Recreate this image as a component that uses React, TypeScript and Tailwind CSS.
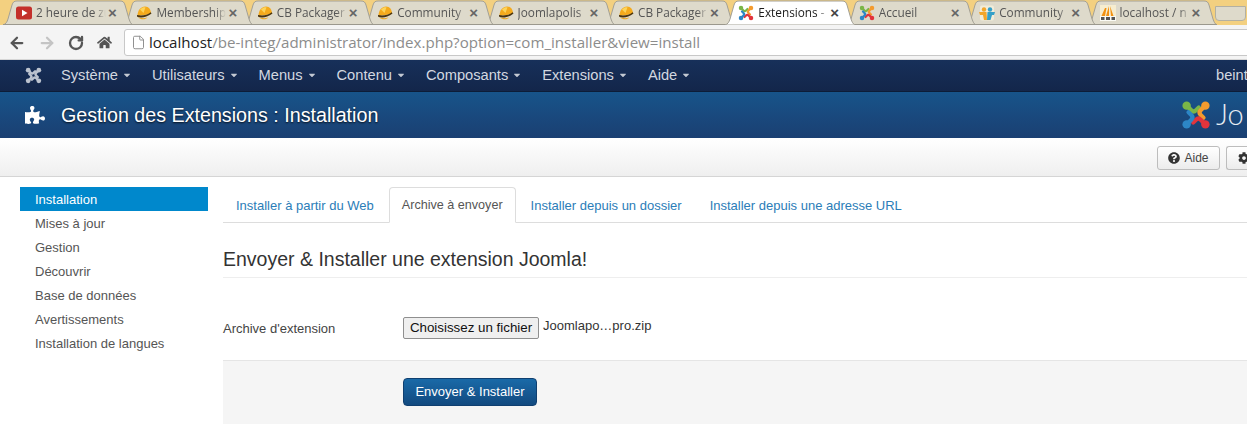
import React from "react";
import { ArrowLeft, ArrowRight, RotateCw, File } from "lucide-react";
import { FaPuzzlePiece, FaQuestionCircle, FaCog, FaHome, FaCaretDown } from "react-icons/fa";

function Hat() {
  return (
    <svg width="16" height="16" viewBox="0 0 16 16" className="shrink-0">
      <path d="M1.500 11C1.500 5 5 1.500 9 1.500c3.800 0 6 3 6 7.500z" fill="#f4aa1c" />
      <path d="M4 4.500C6 2.500 8 2 9.500 2.300L7.500 8z" fill="#fcd45c" />
      <path d="M1 11.500c3 1.800 9 1.500 14.500-3l-.8-1.200C11 10.500 5 11 1 10z" fill="#4a3512" />
      <path d="M2 12.500c3 2.500 7.500 2.200 9.500 0l-4 .8z" fill="#eda81f" />
    </svg>
  );
}

const ARM = "M6.500 6.500 L11 11 Q13.500 13.500 16 11 L19 8";

function Joomla({ size = 16, mono }: { size?: number; mono?: string }) {
  const colors = mono ? [mono, mono, mono, mono] : ["#7ab648", "#f49b2e", "#e2343c", "#2d86c6"];
  return (
    <svg width={size} height={size} viewBox="0 0 32 32" className="shrink-0">
      {colors.map((c, i) => (
        <g key={i} transform={`rotate(${i * 90} 16 16)`}>
          <path d={ARM} fill="none" stroke={c} strokeWidth="4.500" strokeLinecap="round" />
          <circle cx="6" cy="6" r="4.500" fill={c} />
        </g>
      ))}
    </svg>
  );
}

function Youtube() {
  return (
    <svg width="16" height="16" viewBox="0 0 16 16" className="shrink-0">
      <rect x="0" y="1.500" width="16" height="13" rx="2.500" fill="#c4302b" />
      <path d="M6 4.800l5.500 3.200L6 11.200z" fill="#fff" />
    </svg>
  );
}

function People() {
  return (
    <svg width="16" height="16" viewBox="0 0 16 16" className="shrink-0">
      <rect x="1" y="0.500" width="14" height="15" rx="2" fill="#f1ecd8" />
      <circle cx="5" cy="4.500" r="2.200" fill="#f2a62a" />
      <circle cx="11" cy="4.500" r="2.200" fill="#35a0c8" />
      <path d="M0 7h7.500l.5 8H5l-1-5H1z" fill="#f2a62a" />
      <path d="M8.500 7H16l-1 3h-2l-1.500 5H8z" fill="#35a0c8" />
    </svg>
  );
}

function Pma() {
  return (
    <svg width="16" height="16" viewBox="0 0 16 16" className="shrink-0">
      <rect width="16" height="16" fill="#f6edcf" />
      <path d="M1.500 11L5 3h1.500L5 11zM6 11l3-10v10zM10 1l3.500 10h-2.500z" fill="#f29111" />
      <rect x="0" y="11" width="16" height="5" fill="#fbfbf5" />
      <rect x="1" y="12" width="3.500" height="3" fill="#555" />
      <rect x="6" y="12" width="4" height="3" fill="#555" />
      <rect x="11.500" y="12" width="3.500" height="3" fill="#555" />
    </svg>
  );
}

function Tab({ icon, label, active, z }: { icon: React.ReactNode; label: string; active?: boolean; z: number }) {
  return (
    <div className="relative w-[120.4px] h-full shrink-0 flex items-center pl-[13px]" style={{ zIndex: z }}>
      <svg className="absolute left-0 top-0" width="130" height="25" viewBox="0 0 130 25">
        <path
          d="M0 25C3 24 4 22 5 19L9 5C10 2 11 1 14 1H117C120 1 121 2 122 5L126 19C127 22 128 24 130 25Z"
          fill={active ? "#ffffff" : "#dedacb"}
          stroke="#a3a095"
          strokeWidth="1"
        />
        {!active && <path d="M0 24.500H130" stroke="#9b988d" strokeWidth="1" />}
      </svg>
      <div className="relative flex items-center gap-[4px] w-[90px] mt-[1px]">
        {icon}
        <span
          className={`flex-1 min-w-0 whitespace-nowrap overflow-hidden text-[11.800px] font-['Open_Sans',sans-serif] [mask-image:linear-gradient(to_right,black_85%,transparent)] ${active ? "text-[#1a1a1a]" : "text-[#555555]"}`}
        >
          {label}
        </span>
      </div>
      <span className={`absolute left-[105px] top-[5px] text-[15px] leading-[16px] font-bold ${active ? "text-[#444444]" : "text-[#666666]"}`}>×</span>
    </div>
  );
}

const menu = ["Système", "Utilisateurs", "Menus", "Contenu", "Composants", "Extensions", "Aide"];
const side = ["Mises à jour", "Gestion", "Découvrir", "Base de données", "Avertissements", "Installation de langues"];
const browserTabs: { icon: React.ReactNode; label: string; active?: boolean }[] = [
  { icon: <Youtube />, label: "2 heure de zu" },
  { icon: <Hat />, label: "Membership" },
  { icon: <Hat />, label: "CB Packager" },
  { icon: <Hat />, label: "Community" },
  { icon: <Hat />, label: "Joomlapolis" },
  { icon: <Hat />, label: "CB Packager" },
  { icon: <Joomla />, label: "Extensions -", active: true },
  { icon: <Joomla />, label: "Accueil" },
  { icon: <People />, label: "Community" },
  { icon: <Pma />, label: "localhost / n" },
];

export default function App() {
  return (
    <div className="w-[1247px] h-[431px] overflow-hidden bg-white flex flex-col font-['Liberation_Sans',sans-serif]">
      {/* browser tab strip */}
      <div className="h-[25px] shrink-0 bg-[#f3d080] flex pl-[3px] overflow-hidden">
        {browserTabs.map((t, i) => (
          <Tab key={i} icon={t.icon} label={t.label} active={t.active} z={t.active ? 50 : 20 - i} />
        ))}
        <div className="w-[31px] h-[15px] mt-[6px] ml-[8px] shrink-0 rounded-b-[4px] bg-[#dedacb] border border-[#b3b0a2]" />
      </div>

      {/* browser toolbar */}
      <div className="h-[35px] shrink-0 bg-[#f4f4f4] border-b border-[#d6d6d6] flex items-center pl-[8px] pt-[1px]">
        <ArrowLeft size={18} strokeWidth={3} className="text-[#555555]" />
        <ArrowRight size={18} strokeWidth={3} className="text-[#c4c4c4] ml-[12px]" />
        <RotateCw size={16} strokeWidth={3.500} className="text-[#555555] ml-[12px]" />
        <FaHome size={15} className="text-[#555555] ml-[13px]" />
        <div className="ml-[12px] h-[27px] flex-1 -mr-[4px] rounded-l-[3px] border border-[#c8c8c8] bg-white flex items-center pl-[6px]">
          <File size={15} strokeWidth={1.500} className="text-[#8a8a8a]" />
          <span className="ml-[3px] whitespace-nowrap text-[15.100px] font-['Open_Sans',sans-serif] text-[#8c8c8c]">
            <span className="text-[#222222]">localhost</span>/be-integ/administrator/index.php?option=com_installer&amp;view=install
          </span>
        </div>
      </div>

      {/* joomla navbar */}
      <div className="h-[32px] shrink-0 bg-gradient-to-b from-[#17305a] to-[#13264a] border-b border-[#0d1d38] flex items-center pl-[25px] text-[14.660px] text-[#d3d8e0]">
        <Joomla size={17} mono="#bcc3cf" />
        <div className="flex ml-[19px] gap-[20px]">
          {menu.map((m) => (
            <span key={m} className="flex items-center gap-[4px] whitespace-nowrap">
              {m}
              <FaCaretDown size={10} className="text-[#c3c9d3]" />
            </span>
          ))}
        </div>
        <span className="ml-auto w-[31px] shrink-0 overflow-hidden whitespace-nowrap">beint</span>
      </div>

      {/* page title */}
      <div className="h-[46px] shrink-0 bg-gradient-to-b from-[#17548a] to-[#1a3f72] flex items-center pl-[25px] text-white">
        <FaPuzzlePiece size={20} />
        <h1 className="ml-[16px] text-[19.700px] mt-[1px] whitespace-nowrap [text-shadow:0_1px_2px_rgba(0,0,0,0.8)]">
          Gestion des Extensions : Installation
        </h1>
        <div className="ml-auto w-[66px] shrink-0 flex items-center overflow-hidden">
          <Joomla size={30} />
          <span className="ml-[5px] -mt-[2px] text-[29px] leading-[34px] font-['Lato',sans-serif] font-light text-[#e8edf3] whitespace-nowrap">Jo</span>
        </div>
      </div>

      {/* subhead */}
      <div className="h-[39px] shrink-0 bg-gradient-to-b from-white to-[#efefef] border-b border-[#d5d5d5] flex items-center justify-end gap-[6px] pt-[1px] text-[12px] text-[#444444]">
        <button className="h-[24px] w-[63px] rounded-[3px] border border-[#bdbdbd] bg-gradient-to-b from-white to-[#ececec] flex items-center justify-center gap-[4px]">
          <FaQuestionCircle size={12} className="text-[#333333]" />
          Aide
        </button>
        <button className="h-[24px] w-[21px] rounded-l-[3px] border border-r-0 border-[#bdbdbd] bg-gradient-to-b from-white to-[#ececec] flex items-center pl-[11px] overflow-hidden">
          <FaCog size={12} className="text-[#333333] shrink-0" />
        </button>
      </div>

      {/* content */}
      <div className="flex-1 min-h-0 flex pl-[20px] pt-[10px]">
        <div className="w-[188px] shrink-0 text-[13px] text-[#555555]">
          <div className="h-[24px] bg-[#0088cc] text-white pl-[15px] flex items-center pt-[1px]">Installation</div>
          {side.map((s) => (
            <div key={s} className="h-[24px] pl-[15px] flex items-center pt-[1px]">{s}</div>
          ))}
        </div>
        <div className="ml-[15px] flex-1 min-w-0">
          <div className="h-[36px] border-b border-[#dddddd] flex text-[13px] text-[#2b7db8]">
            <span className="h-[36px] flex items-center pl-[13px] pr-[15px] pt-[1px]">Installer à partir du Web</span>
            <span className="h-[36px] flex items-center px-[12px] pt-[1px] bg-white rounded-t-[4px] border border-[#dddddd] border-b-white text-[12.600px] text-[#555555]">Archive à envoyer</span>
            <span className="h-[36px] flex items-center pt-[1px] ml-[15px]">Installer depuis un dossier</span>
            <span className="h-[36px] flex items-center pt-[1px] ml-[28px]">Installer depuis une adresse URL</span>
          </div>
          <h2 className="mt-[25px] h-[30px] border-b border-[#eeeeee] text-[19.500px] leading-[23px] text-[#333333]">
            Envoyer &amp; Installer une extension Joomla!
          </h2>
          <div className="mt-[39px] h-[22px] flex items-center text-[13px] text-[#444444]">
            <span className="w-[180px] shrink-0 pt-[1px]">Archive d'extension</span>
            <button className="h-[22px] w-[136px] shrink-0 rounded-[2px] border border-[#8f8f8f] bg-[#efefef] text-[13.330px] text-[#111111]">Choisissez un fichier</button>
            <span className="ml-[4px] -mt-[5px] text-[#333333]">Joomlapo…pro.zip</span>
          </div>
          <div className="mt-[21px] h-[64px] bg-[#f5f5f5] border-t border-[#e5e5e5] pl-[180px] pt-[17px]">
            <button className="h-[28px] w-[134px] rounded-[4px] border border-[#0f3f70] bg-gradient-to-b from-[#1a6aa8] to-[#124a80] text-[13px] text-white">Envoyer &amp; Installer</button>
          </div>
        </div>
      </div>
    </div>
  );
}
